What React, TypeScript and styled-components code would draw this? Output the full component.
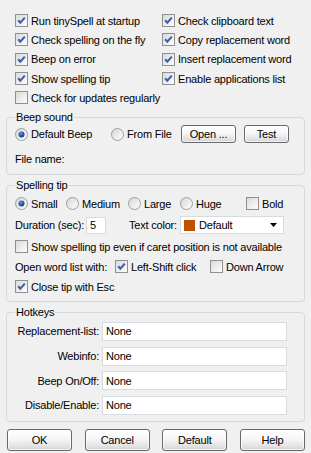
import { Fragment } from "react";
import styled, { createGlobalStyle } from "styled-components";

const Global = createGlobalStyle`
  html, body {
    margin: 0;
    padding: 0;
    background: #f0f0f0;
  }
  body {
    font-family: "Liberation Sans", Arial, sans-serif;
    font-size: 11px;
    letter-spacing: -0.2px;
    color: #000;
  }
`;

const Dialog = styled.div`
  width: 311px;
  height: 453px;
  overflow: hidden;
  background: #f0f0f0;
`;

const Options = styled.div`
  display: grid;
  grid-template-columns: 147px 1fr;
  grid-auto-rows: 19.33px;
  padding: 11px 0 0 15px;
`;

const Group = styled.fieldset<{ $top: number; $pt?: number; $pb: number; $pr?: number }>`
  margin: ${(p) => p.$top}px 6px 0;
  padding: ${(p) => p.$pt ?? 0}px ${(p) => p.$pr ?? 8}px ${(p) => p.$pb}px 8px;
  border: 1px solid #d3d9dd;
  border-radius: 4px;
  min-width: 0;
`;

const Legend = styled.legend`
  padding: 0 1px;
  line-height: 13px;
`;

const Row = styled.div<{ $h?: number; $mt?: number }>`
  display: flex;
  align-items: center;
  height: ${(p) => p.$h ?? 20}px;
  margin-top: ${(p) => p.$mt ?? 0}px;
`;

const Item = styled.label<{ $w?: number }>`
  display: flex;
  align-items: center;
  gap: 3px;
  white-space: nowrap;
  ${(p) => (p.$w ? `width: ${p.$w}px; flex: none;` : "")}
`;

const Text = styled.span<{ $w?: number }>`
  white-space: nowrap;
  ${(p) => (p.$w ? `width: ${p.$w}px; flex: none;` : "")}
`;

const Btn = styled.button<{ $w: number; $h: number }>`
  width: ${(p) => p.$w}px;
  height: ${(p) => p.$h}px;
  flex: none;
  padding: 0;
  font: inherit;
  letter-spacing: inherit;
  color: #000;
  border: 1px solid #67696c;
  border-radius: 3px;
  background: linear-gradient(#ffffff 0%, #f6f6f6 45%, #e3e3e3 80%, #d2d2d2 100%);
  box-shadow: inset 0 0 0 1px rgba(255, 255, 255, 0.7);
`;

const NumBox = styled.div`
  width: 20px;
  height: 17px;
  box-sizing: border-box;
  flex: none;
  background: #fff;
  border: 1px solid #d6dbe0;
  display: flex;
  align-items: center;
  padding-left: 3px;
  margin-right: 23px;
`;

const Combo = styled.div`
  width: 104px;
  height: 18px;
  box-sizing: border-box;
  flex: none;
  background: #fff;
  border: 1px solid #d6dbe0;
  display: flex;
  align-items: center;
  padding: 0 6px 0 3px;
  gap: 4px;
`;

const Swatch = styled.span`
  width: 11px;
  height: 11px;
  background: #c04f00;
  flex: none;
`;

const Hotkeys = styled.div`
  display: grid;
  grid-template-columns: 87px 1fr;
  grid-auto-rows: 19px;
  row-gap: 5.67px;
`;

const HotLabel = styled.span`
  display: flex;
  align-items: center;
  justify-content: flex-end;
  padding-right: 3px;
  white-space: nowrap;
`;

const Field = styled.div`
  background: #fff;
  border: 1px solid #d6dbe0;
  display: flex;
  align-items: center;
  padding-left: 3px;
`;

const Footer = styled.div`
  display: flex;
  justify-content: space-between;
  padding: 0 6px 0 7px;
  margin-top: 7px;
`;

function Box({ checked }: { checked?: boolean }) {
  return (
    <svg width="13" height="13" viewBox="0 0 13 13" style={{ flex: "none" }}>
      <defs>
        <linearGradient id="cbg" x1="0" y1="0" x2="1" y2="1">
          <stop offset="0" stopColor="#d8d8d4" />
          <stop offset="1" stopColor="#ffffff" />
        </linearGradient>
      </defs>
      <rect x="0.5" y="0.5" width="12" height="12" fill="url(#cbg)" stroke="#8f9093" />
      {checked && (
        <path d="M3.2 6.2 L5.3 8.6 L9.8 3.6" fill="none" stroke="#3c5fae" strokeWidth="2.1" />
      )}
    </svg>
  );
}

function Dot({ on }: { on?: boolean }) {
  return (
    <svg width="13" height="13" viewBox="0 0 13 13" style={{ flex: "none" }}>
      <defs>
        <linearGradient id="rbg" x1="0" y1="0" x2="1" y2="1">
          <stop offset="0" stopColor="#d5d5d2" />
          <stop offset="1" stopColor="#ffffff" />
        </linearGradient>
        <radialGradient id="rdot" cx="0.4" cy="0.35" r="0.7">
          <stop offset="0" stopColor="#7aa0e0" />
          <stop offset="0.5" stopColor="#2a58b0" />
          <stop offset="1" stopColor="#163a7a" />
        </radialGradient>
      </defs>
      <circle cx="6.5" cy="6.5" r="6" fill="url(#rbg)" stroke="#9c9da0" />
      {on && <circle cx="6.5" cy="6.5" r="3" fill="url(#rdot)" />}
    </svg>
  );
}

function Arrow() {
  return (
    <svg width="7" height="4" viewBox="0 0 7 4" style={{ marginLeft: "auto" }}>
      <path d="M0 0 H7 L3.5 4 Z" fill="#000" />
    </svg>
  );
}

const topOptions = [
  ["Run tinySpell at startup", true],
  ["Check clipboard text", true],
  ["Check spelling on the fly", true],
  ["Copy replacement word", true],
  ["Beep on error", true],
  ["Insert replacement word", true],
  ["Show spelling tip", true],
  ["Enable applications list", true],
  ["Check for updates regularly", false],
] as const;

const hotkeys = ["Replacement-list:", "Webinfo:", "Beep On/Off:", "Disable/Enable:"];

export default function App() {
  return (
    <Dialog>
      <Global />
      <Options>
        {topOptions.map(([label, on]) => (
          <Item key={label}>
            <Box checked={on} />
            {label}
          </Item>
        ))}
      </Options>

      <Group $top={3.8} $pb={5}>
        <Legend>Beep sound</Legend>
        <Row>
          <Item $w={96}>
            <Dot on />
            Default Beep
          </Item>
          <Item $w={70}>
            <Dot />
            From File
          </Item>
          <Btn $w={55} $h={18} style={{ marginRight: 8 }}>
            Open ...
          </Btn>
          <Btn $w={45} $h={18}>
            Test
          </Btn>
        </Row>
        <Row $mt={4.5}>
          <Text>File name:</Text>
        </Row>
      </Group>

      <Group $top={4.5} $pt={1.5} $pb={4}>
        <Legend>Spelling tip</Legend>
        <Row>
          <Item $w={51}>
            <Dot on />
            Small
          </Item>
          <Item $w={62}>
            <Dot />
            Medium
          </Item>
          <Item $w={52}>
            <Dot />
            Large
          </Item>
          <Item $w={66}>
            <Dot />
            Huge
          </Item>
          <Item>
            <Box />
            Bold
          </Item>
        </Row>
        <Row $h={23}>
          <Text $w={71}>Duration (sec):</Text>
          <NumBox>5</NumBox>
          <Text $w={51}>Text color:</Text>
          <Combo>
            <Swatch />
            Default
            <Arrow />
          </Combo>
        </Row>
        <Row>
          <Item>
            <Box />
            Show spelling tip even if caret position is not available
          </Item>
        </Row>
        <Row>
          <Text $w={100}>Open word list with:</Text>
          <Item $w={95}>
            <Box checked />
            Left-Shift click
          </Item>
          <Item>
            <Box />
            Down Arrow
          </Item>
        </Row>
        <Row>
          <Item>
            <Box checked />
            Close tip with Esc
          </Item>
        </Row>
      </Group>

      <Group $top={4.5} $pt={2.5} $pb={6} $pr={17}>
        <Legend>Hotkeys</Legend>
        <Hotkeys>
          {hotkeys.map((k) => (
            <Fragment key={k}>
              <HotLabel>{k}</HotLabel>
              <Field>None</Field>
            </Fragment>
          ))}
        </Hotkeys>
      </Group>

      <Footer>
        {["OK", "Cancel", "Default", "Help"].map((b) => (
          <Btn key={b} $w={65} $h={22}>
            {b}
          </Btn>
        ))}
      </Footer>
    </Dialog>
  );
}
